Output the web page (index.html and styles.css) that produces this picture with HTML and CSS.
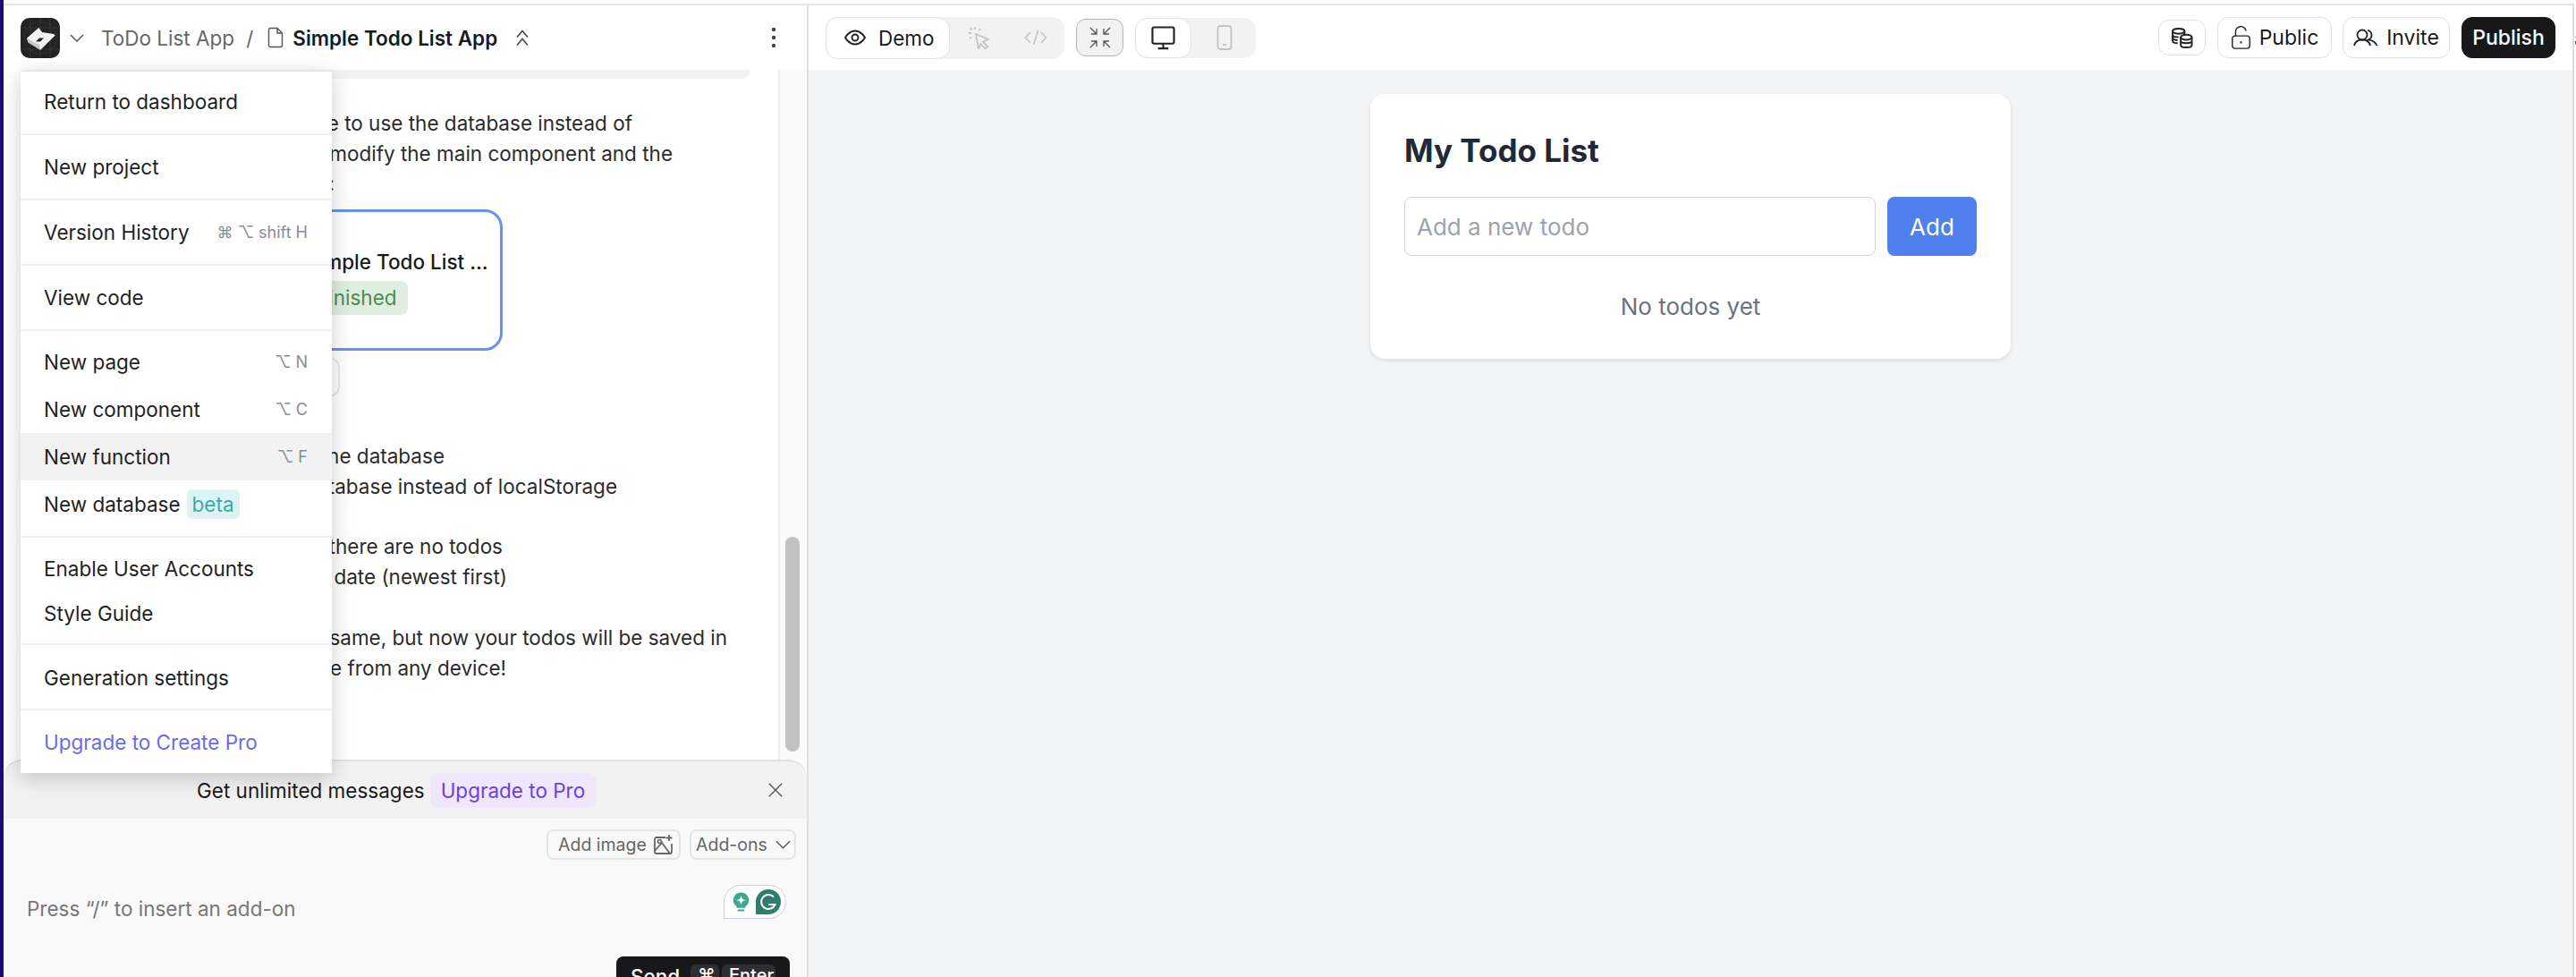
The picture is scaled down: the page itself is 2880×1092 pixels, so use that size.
FILE: index.html
```html
<!DOCTYPE html>
<html lang="en">
<head>
<meta charset="utf-8">
<title>Simple Todo List App</title>
<link rel="stylesheet" href="styles.css">
</head>
<body>
<div class="strip"></div>
<div class="app">
  <section class="left">
    <header class="lhead">
      <svg class="logo" viewBox="0 0 44 45"><rect width="44" height="45" rx="10" fill="#232323"/><path d="M0 11H44M0 35H44M11 0V45M33 0V45M22 0V45" stroke="#454545" stroke-width=".6"/><circle cx="22" cy="22" r="18" fill="none" stroke="#5a5a5a" stroke-width=".7" stroke-dasharray="1 2"/><path d="M7 22.700 20.300 11 24 16 37 18 38.700 19.500 22 36 20 30 8.700 27.700Z" fill="#f2f2f2"/><path d="M7 22.700 20 30 22 36 8.700 27.700Z" fill="#c9c9c9"/><path d="M17 26.500 21 22.500H26L22 26.500Z" fill="#232323"/></svg>
      <svg class="ic chev" viewBox="0 0 18 10"><path d="M1 1 9 9 17 1" fill="none" stroke="#555" stroke-width="1.6"/></svg>
      <span class="proj">ToDo List App</span>
      <span class="slash">/</span>
      <svg class="ic file" viewBox="0 0 18 24"><path d="M1.5 3.5A2 2 0 0 1 3.500 1.500H11L16.500 7V20.500A2 2 0 0 1 14.500 22.500H3.500A2 2 0 0 1 1.500 20.500ZM11 1.500V7H16.500" fill="none" stroke="#555" stroke-width="1.400"/></svg>
      <span class="title">Simple Todo List App</span>
      <svg class="ic updown" viewBox="0 0 16 20"><path d="M2 9 8 2 14 9M2 18 8 11 14 18" fill="none" stroke="#444" stroke-width="1.600"/></svg>
      <span class="grow"></span>
      <svg class="ic dots" viewBox="0 0 6 24"><circle cx="3" cy="3" r="2.200" fill="#444"/><circle cx="3" cy="12" r="2.200" fill="#444"/><circle cx="3" cy="21" r="2.200" fill="#444"/></svg>
    </header>

    <div class="chat">
      <div class="msgs">
        <div class="bubble"></div>
        <p class="line l1">I'll update the code to use the database instead of</p>
        <p class="line l2">localStorage. We'll modify the main component and the</p>
        <p class="line l3">function it calls:</p>
        <div class="gen">
          <div class="gen-title">Simple Todo List ...</div>
          <div class="gen-pill">Finished</div>
        </div>
        <div class="restore"></div>
        <p class="line l4 top">Todos are stored in the database</p>
        <p class="line l5">Reads from the database instead of localStorage</p>
        <p class="line l6 gap">A message shows when there are no todos</p>
        <p class="line l7">Todos are sorted by date (newest first)</p>
        <p class="line l8 gap">The app looks the same, but now your todos will be saved in</p>
        <p class="line l9">and available from any device!</p>
      </div>
      <div class="track"><div class="thumb"></div></div>
    </div>

    <div class="promo">
      <span class="promo-text">Get unlimited messages</span>
      <span class="promo-pill">Upgrade to Pro</span>
      <svg class="ic close" viewBox="0 0 20 20"><path d="M2 2 18 18M18 2 2 18" fill="none" stroke="#555" stroke-width="1.500"/></svg>
    </div>

    <div class="composer">
      <div class="tools">
        <span class="tool t-img">Add image
          <svg class="ic img" viewBox="0 0 24 24"><path d="M14 4H4A2 2 0 0 0 2 6V20A2 2 0 0 0 4 22H19A2 2 0 0 0 21 20V11M2 19 10 10 19 22M18 1V8M14.500 4.500H21.500" fill="none" stroke="#666" stroke-width="1.800"/><circle cx="7.500" cy="8.500" r="2" fill="none" stroke="#666" stroke-width="1.600"/></svg>
        </span>
        <span class="tool t-add">Add-ons
          <svg class="ic chev2" viewBox="0 0 18 10"><path d="M1 1 9 9 17 1" fill="none" stroke="#555" stroke-width="1.500"/></svg>
        </span>
      </div>
      <div class="inputrow">
        <span class="hint">Press “/” to insert an add-on</span>
        <div class="gram">
          <svg class="ic bulb" viewBox="0 0 20 24"><path d="M10 1A9 9 0 0 0 5 17.500V19H15V17.500A9 9 0 0 0 10 1ZM6 21H14V23H6Z" fill="#3ea88f"/><path d="M10 5 12 9 16 10 12 11 10 15 8 11 4 10 8 9Z" fill="#fff"/></svg>
          <svg class="ic g" viewBox="0 0 28 28"><path d="M14 0A14 14 0 0 1 14 28H0V14A14 14 0 0 1 14 0Z" fill="#2f7d6c"/><path d="M20 8.500A8 8 0 1 0 21.500 17H14" fill="none" stroke="#fff" stroke-width="2"/></svg>
        </div>
      </div>
      <div class="sendrow">
        <div class="send"><span class="send-t">Send</span><kbd class="k k1">⌘</kbd><kbd class="k k2">Enter</kbd></div>
      </div>
    </div>

    <nav class="menu">
      <div class="grp g1"><a class="it">Return to dashboard</a></div>
      <div class="grp"><a class="it">New project</a></div>
      <div class="grp"><a class="it">Version History<span class="sc">⌘ ⌥ shift H</span></a></div>
      <div class="grp"><a class="it">View code</a></div>
      <div class="grp g5">
        <a class="it">New page<span class="sc">⌥ N</span></a>
        <a class="it">New component<span class="sc">⌥ C</span></a>
        <a class="it hot">New function<span class="sc">⌥ F</span></a>
        <a class="it">New database<span class="beta">beta</span></a>
      </div>
      <div class="grp"><a class="it tall">Enable User Accounts</a><a class="it tall">Style Guide</a></div>
      <div class="grp g7"><a class="it">Generation settings</a></div>
      <div class="grp last"><a class="it up">Upgrade to Create Pro</a></div>
    </nav>
  </section>

  <section class="right">
    <header class="rhead">
      <div class="seg">
        <span class="seg-on"><svg class="ic eye" viewBox="0 0 24 24"><path d="M1 12S5 4.500 12 4.500 23 12 23 12 19 19.500 12 19.500 1 12 1 12Z" fill="none" stroke="#222" stroke-width="1.900"/><circle cx="12" cy="12" r="3.500" fill="none" stroke="#222" stroke-width="1.900"/></svg>Demo</span>
        <svg class="ic cur" viewBox="0 0 26 26"><path d="M9 9 23 15 17 17.500 22 23 19.500 25.500 14.500 20 12 25.500Z" fill="none" stroke="#c4c4c4" stroke-width="1.800"/><path d="M8 1V4M1 8H4M2.500 2.500 4.500 4.500M14 3 12.500 5M2 14 4 12.500" stroke="#c4c4c4" stroke-width="1.800"/></svg>
        <svg class="ic code" viewBox="0 0 26 18"><path d="M7 3 1.500 9 7 15M19 3 24.500 9 19 15M15.500 1 10.500 17" fill="none" stroke="#c4c4c4" stroke-width="1.700"/></svg>
      </div>
      <span class="shrink"><svg class="ic arrows" viewBox="0 0 24 24"><path d="M1 1 8 8M8 2V8H2M23 1 16 8M16 2V8H22M1 23 8 16M2 16H8V22M23 23 16 16M16 22V16H22" fill="none" stroke="#555" stroke-width="1.300"/></svg></span>
      <div class="seg2">
        <span class="seg2-on"><svg class="ic mon" viewBox="0 0 28 28"><rect x="1.500" y="1.500" width="25" height="19" rx="2" fill="none" stroke="#222" stroke-width="2.200"/><path d="M14 21V26M8 26H20" stroke="#222" stroke-width="2.200"/></svg></span>
        <svg class="ic ph" viewBox="0 0 18 28"><rect x="1.500" y="1" width="15" height="26" rx="3" fill="none" stroke="#c4c4c4" stroke-width="1.800"/><path d="M7 22H11" stroke="#c4c4c4" stroke-width="2"/></svg>
      </div>
      <span class="grow"></span>
      <span class="btn coin"><svg class="ic coins" viewBox="0 0 26 24"><g fill="none" stroke="#222" stroke-width="2"><ellipse cx="9" cy="4" rx="7" ry="3"/><path d="M2 4V15C2 17 5 18 8 18M16 4V8M2 8C2 10 5 11 9 11M2 12C2 13 5 14.500 8 14.500"/><ellipse cx="18" cy="11" rx="6.500" ry="3"/><path d="M11.500 11V20C11.500 22 14 23 18 23S24.500 22 24.500 20V11M11.500 15.500C11.500 17 14 18 18 18S24.500 17 24.500 15.500"/></g></svg></span>
      <span class="btn pub"><svg class="ic lock" viewBox="0 0 24 28"><rect x="1.500" y="12" width="21" height="15" rx="3.500" fill="none" stroke="#222" stroke-width="1.500"/><path d="M5.500 12V7.500A6.300 6.300 0 0 1 18 6" fill="none" stroke="#222" stroke-width="1.500"/><path d="M12 18.500V21" stroke="#222" stroke-width="2"/></svg>Public</span>
      <span class="btn inv"><svg class="ic users" viewBox="0 0 28 20"><g fill="none" stroke="#222" stroke-width="1.800"><circle cx="10" cy="7" r="5.500"/><path d="M1 19C2 14.500 5 12.500 10 12.500S18 14.500 19 19M16 1.800A5.500 5.500 0 0 1 17 12.300C21 13 25 15 26.500 19"/></g></svg>Invite</span>
      <span class="btn publish">Publish</span>
    </header>
    <main class="stage">
      <div class="card">
        <h1 class="h">My Todo List</h1>
        <div class="form">
          <div class="field">Add a new todo</div>
          <div class="add">Add</div>
        </div>
        <p class="empty">No todos yet</p>
      </div>
    </main>
  </section>
  <aside class="edge"><span class="edge-a">a</span></aside>
</div>
</body>
</html>
```

FILE: styles.css
```css
* { box-sizing: border-box; }
html, body { margin: 0; height: 1092px; overflow: hidden; background: #fff; }
body { font-family: Inter, "Liberation Sans", sans-serif; font-size: 22.500px; color: #1a1a1a; display: flex; }
p, h1 { margin: 0; }
.strip { width: 4px; flex: none; background: #1f0a78; }
.app { flex: 1; min-width: 0; display: flex; height: 1092px; padding-top: 4px; }
.ic { display: block; flex: none; }
.grow { flex: 1; }

.left { position: relative; width: 900px; flex: none; display: flex; flex-direction: column; border-top: 2px solid #e5e5e5; border-right: 2px solid #e0e0e0; background: #fff; }
.lhead { height: 72px; flex: none; display: flex; align-items: center; padding-left: 19px; }
.logo { width: 44px; height: 45px; flex: none; margin-top: 1px; }
.chev { width: 16px; height: 9px; margin-left: 11px; }
.proj { margin-left: 19px; color: #666; }
.slash { margin-left: 13px; color: #666; }
.file { width: 18px; height: 24px; margin-left: 16px; }
.title { margin-left: 10px; font-weight: 600; }
.updown { width: 16px; height: 21px; margin-left: 20px; }
.dots { width: 6px; height: 24px; margin-right: 34px; }

.chat { flex: 1; min-height: 0; display: flex; }
.msgs { flex: 1; min-width: 0; padding-left: 24px; border-right: 2px solid #ededed; }
.bubble { height: 10px; width: 811px; background: #f2f2f2; border-radius: 0 0 14px 14px; margin-bottom: 33px; }
.line { line-height: 33.700px; height: 33.700px; white-space: nowrap; text-align: right; color: #2b2b2b; }
.l1 { width: 679px; }
.l2 { width: 724px; }
.l3 { width: 346px; }
.l4 { width: 469px; }
.l5 { width: 662px; }
.l6 { width: 534px; }
.l7 { width: 539px; }
.l8 { width: 785px; }
.l9 { width: 538px; }
.top { margin-top: 49px; }
.gap { margin-top: 34px; }
.gen { width: 534px; height: 158px; margin-top: 12px; border: 3px solid #6494ee; border-radius: 20px; padding: 40px 0 0 311px; }
.gen-title { white-space: nowrap; font-weight: 500; line-height: 32px; }
.gen-pill { display: inline-block; margin-top: 5px; height: 38px; line-height: 38px; padding: 0 12px; border-radius: 8px; background: #dfeee0; color: #4c8c4c; }
.restore { width: 352px; height: 45px; margin-top: 7px; border: 2px solid #e8e8e8; border-radius: 12px; }
.track { width: 30px; flex: none; background: #fafafa; padding: 0 6px; }
.thumb { width: 16px; height: 240px; margin-top: 522px; background: #c1c1c1; border-radius: 8px; }

.promo { height: 66px; flex: none; position: relative; display: flex; align-items: center; border-top: 2px solid #e2e2e2; border-radius: 20px 20px 0 0; background: #f2f2f2; padding-left: 216px; }
.promo-text { color: #1a1a1a; }
.promo-pill { margin-left: 6px; height: 39px; line-height: 39px; padding: 0 12px; border-radius: 8px; background: #efe7fb; color: #6d3fe0; }
.close { position: absolute; right: 26px; top: 23px; width: 18px; height: 18px; }

.composer { height: 177px; flex: none; background: #f9f9f9; overflow: hidden; }
.tools { display: flex; justify-content: flex-end; gap: 10px; padding: 12px 12px 0 0; }
.tool { height: 34px; display: flex; align-items: center; border: 2px solid #e4e4e4; border-radius: 8px; color: #666; font-size: 19.500px; }
.t-img { width: 150px; padding-left: 11px; gap: 7px; }
.t-add { width: 119px; padding-left: 5px; gap: 9px; }
.img { width: 24px; height: 24px; }
.chev2 { width: 17px; height: 10px; }
.inputrow { display: flex; justify-content: space-between; align-items: flex-start; padding: 28px 23px 0 26px; }
.hint { color: #777; margin-top: 13px; }
.gram { width: 70px; height: 38px; display: flex; align-items: center; gap: 7px; padding-left: 9px; background: #fff; border: 1px solid #cdd0dc; border-radius: 19px 19px 19px 0; }
.bulb { width: 19px; height: 24px; }
.g { width: 28px; height: 28px; }
.sendrow { display: flex; justify-content: flex-end; padding: 40px 19px 0 0; }
.send { width: 194px; height: 60px; display: flex; align-items: flex-start; background: #18181a; border-radius: 8px; color: #fff; padding: 9px 0 0 16px; font-weight: 500; }
.send-t { width: 67px; }
.k { font-family: inherit; font-size: 20px; background: #2f2f31; border-radius: 6px; height: 40px; padding: 0 8px; }
.k1 { width: 32px; margin-right: 3px; }
.k2 { width: 60px; }

.menu { position: absolute; left: 19px; top: 73px; width: 348px; background: #fff; border-top: 1px solid #e3e3e3; box-shadow: 0 6px 22px rgba(0,0,0,.2); }
.grp { padding: 9px 0; border-bottom: 2px solid #f1f1f1; }
.g1 { padding-top: 7px; }
.g5 { padding-top: 8px; }
.g7 { padding: 10px 0 8px; }
.last { border-bottom: 0; padding-bottom: 8px; }
.it { height: 53px; display: flex; align-items: center; justify-content: space-between; padding: 0 27px 0 26px; white-space: nowrap; color: #1f1f1f; }
.it.tall { height: 50px; }
.it.hot { background: #f2f2f2; }
.it.up { color: #6a6af0; }
.sc { color: #8a8a98; font-size: 18px; }
.beta { margin: 0 auto 0 7px; height: 33px; line-height: 33px; padding: 0 6px; border-radius: 6px; background: #dcf3f3; color: #3ea9a9; }

.right { flex: 1; min-width: 0; display: flex; flex-direction: column; border-top: 2px solid #e5e5e5; }
.rhead { height: 72px; flex: none; display: flex; align-items: center; padding: 0 19px 0 19px; background: #fff; }
.seg { width: 267px; height: 47px; display: flex; align-items: center; background: #f2f2f2; border-radius: 14px; }
.seg-on { width: 139px; height: 47px; display: flex; align-items: center; gap: 14px; padding-left: 20px; background: #fff; border: 1px solid #e2e2e2; border-radius: 14px; }
.eye { width: 24px; height: 24px; }
.cur { width: 26px; height: 26px; margin-left: 20px; }
.code { width: 26px; height: 18px; margin-left: 37px; }
.shrink { width: 53px; height: 42px; margin-left: 13px; display: flex; align-items: center; justify-content: center; background: #f2f2f2; border: 1.500px solid #b5b5b5; border-radius: 11px; }
.arrows { width: 24px; height: 24px; }
.seg2 { width: 135px; height: 45px; margin-left: 13px; display: flex; align-items: center; background: #f2f2f2; border-radius: 14px; }
.seg2-on { width: 63px; height: 45px; display: flex; align-items: center; justify-content: center; background: #fff; border: 1px solid #e2e2e2; border-radius: 14px; }
.mon { width: 27px; height: 27px; }
.ph { width: 18px; height: 28px; margin-left: 28px; }
.btn { height: 46px; display: flex; align-items: center; justify-content: center; gap: 9px; border: 1px solid #e0e0e0; border-radius: 12px; white-space: nowrap; font-size: 23px; }
.coin { width: 53px; height: 40px; }
.coins { width: 25px; height: 23px; }
.pub { width: 128px; margin-left: 13px; }
.lock { width: 23px; height: 26px; }
.inv { width: 120px; margin-left: 12px; }
.users { width: 28px; height: 20px; }
.publish { width: 105px; margin-left: 13px; background: #18181a; border-color: #18181a; color: #fff; font-weight: 500; }

.stage { flex: 1; min-height: 0; background: #f3f4f6; padding-top: 27px; display: flex; justify-content: center; align-items: flex-start; }
.card { width: 716px; height: 296px; background: #fff; border-radius: 16px; box-shadow: 0 2px 5px rgba(0,0,0,.1); padding: 38px 38px 0 38px; }
.h { font-size: 35px; line-height: 50px; font-weight: 700; color: #1f2937; }
.form { display: flex; gap: 13px; margin-top: 27px; }
.field { flex: 1; height: 66px; border: 1.500px solid #d1d5db; border-radius: 8px; display: flex; align-items: center; padding-left: 13px; color: #9ca3af; font-size: 26px; }
.add { width: 100px; height: 66px; background: #4f80ee; border-radius: 8px; display: flex; align-items: center; justify-content: center; color: #fff; font-size: 26px; }
.empty { margin-top: 39px; text-align: center; color: #6b7280; font-size: 26px; line-height: 36px; }

.edge { width: 4px; flex: none; border-left: 2px solid #ddd; background: #fff; overflow: hidden; position: relative; }
.edge-a { position: absolute; top: 26px; left: 0; color: #444; font-size: 22px; }
```
